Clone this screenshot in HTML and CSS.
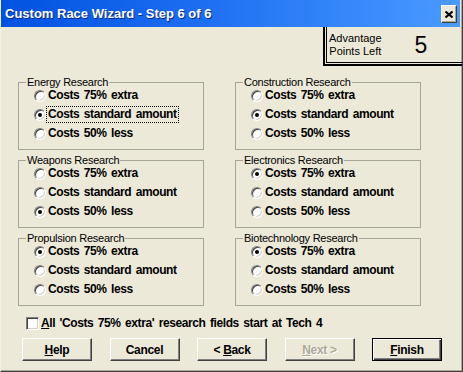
FILE: index.html
```html
<!DOCTYPE html>
<html lang="en">

<head>
    <meta charset="UTF-8">
    <title>Custom Race Wizard - Step 6 of 6</title>
    <link rel="stylesheet" href="styles.css">
</head>

<body>
    <div class="window">
        <div class="titlebar">
            <span class="title">Custom Race Wizard - Step 6 of 6</span>
            <span class="close">
                <svg width="8" height="7" viewBox="0 0 8 7">
                    <path d="M0.5 0.5 L7.5 6.5 M7.5 0.5 L0.5 6.5" stroke="#000" stroke-width="2" fill="none"/>
                </svg>
            </span>
        </div>

        <div class="points-row">
            <div class="points">
                <div class="points-inner">
                    <div class="points-label">Advantage<br>Points Left</div>
                    <div class="points-value">5</div>
                </div>
            </div>
        </div>

        <div class="groups">
            <div class="group">
                <div class="legend">Energy Research</div>
                <div class="opt"><span class="radio"></span><span class="txt">Costs 75% extra</span></div>
                <div class="opt"><span class="radio on"></span><span class="txt focus">Costs standard amount</span></div>
                <div class="opt"><span class="radio"></span><span class="txt">Costs 50% less</span></div>
            </div>
            <div class="group">
                <div class="legend">Construction Research</div>
                <div class="opt"><span class="radio"></span><span class="txt">Costs 75% extra</span></div>
                <div class="opt"><span class="radio on"></span><span class="txt">Costs standard amount</span></div>
                <div class="opt"><span class="radio"></span><span class="txt">Costs 50% less</span></div>
            </div>
            <div class="group">
                <div class="legend">Weapons Research</div>
                <div class="opt"><span class="radio"></span><span class="txt">Costs 75% extra</span></div>
                <div class="opt"><span class="radio"></span><span class="txt">Costs standard amount</span></div>
                <div class="opt"><span class="radio on"></span><span class="txt">Costs 50% less</span></div>
            </div>
            <div class="group">
                <div class="legend">Electronics Research</div>
                <div class="opt"><span class="radio on"></span><span class="txt">Costs 75% extra</span></div>
                <div class="opt"><span class="radio"></span><span class="txt">Costs standard amount</span></div>
                <div class="opt"><span class="radio"></span><span class="txt">Costs 50% less</span></div>
            </div>
            <div class="group">
                <div class="legend">Propulsion Research</div>
                <div class="opt"><span class="radio on"></span><span class="txt">Costs 75% extra</span></div>
                <div class="opt"><span class="radio"></span><span class="txt">Costs standard amount</span></div>
                <div class="opt"><span class="radio"></span><span class="txt">Costs 50% less</span></div>
            </div>
            <div class="group">
                <div class="legend">Biotechnology Research</div>
                <div class="opt"><span class="radio on"></span><span class="txt">Costs 75% extra</span></div>
                <div class="opt"><span class="radio"></span><span class="txt">Costs standard amount</span></div>
                <div class="opt"><span class="radio"></span><span class="txt">Costs 50% less</span></div>
            </div>
        </div>

        <div class="tech4">
            <span class="check"></span>
            <span class="txt"><u>A</u>ll 'Costs 75% extra' research fields start at Tech 4</span>
        </div>

        <div class="buttons">
            <div class="btn"><span><u>H</u>elp</span></div>
            <div class="btn"><span>Cancel</span></div>
            <div class="btn"><span>&lt; <u>B</u>ack</span></div>
            <div class="btn disabled"><span><u>N</u>ext &gt;</span></div>
            <div class="btn default"><span><u>F</u>inish</span></div>
        </div>
    </div>
</body>

</html>
```

FILE: styles.css
```css
html, body {
    margin: 0;
    padding: 0;
}

body {
    font-family: "Liberation Sans", Arial, sans-serif;
    background: #ece9d8;
}

.window {
    box-sizing: border-box;
    width: 463px;
    height: 372px;
    background: #ece9d8;
    border-left: 1px solid #f4f2ea;
    border-right: 1px solid #404040;
    border-bottom: 1px solid #404040;
    box-shadow: inset -1px -1px 0 #aca899;
    overflow: hidden;
}

.titlebar {
    height: 27px;
    margin-right: 2px;
    display: flex;
    align-items: center;
    justify-content: space-between;
    background: linear-gradient(to right, #0052e0, #1f6ff2 45%, #3d8ffd 85%, #4a9bff);
}

.title {
    padding-left: 4px;
    color: #fff;
    font-weight: bold;
    font-size: 13px;
    text-shadow: 1px 1px 0 #0a2a8a;
}

.close {
    box-sizing: border-box;
    width: 16px;
    height: 18px;
    margin-right: 3px;
    margin-top: 1px;
    display: flex;
    align-items: center;
    justify-content: center;
    background: #ece9d8;
    border: 1px solid;
    border-color: #fff #404040 #404040 #fff;
    box-shadow: inset -1px -1px 0 #aca899;
}

/* advantage points box */
.points-row {
    display: flex;
    justify-content: flex-end;
}

.points {
    width: 139px;
    height: 39px;
    box-sizing: border-box;
    border-left: 2px solid #000;
    border-bottom: 2px solid #000;
    padding: 0 0 1px 1px;
}

.points-inner {
    box-sizing: border-box;
    height: 100%;
    border-left: 1px solid #000;
    border-bottom: 1px solid #000;
    display: flex;
    align-items: flex-start;
    padding: 5px 0 0 2px;
}

.points-label {
    font-size: 11px;
    line-height: 13px;
    text-align: center;
    color: #000;
}

.points-value {
    margin-left: 33px;
    margin-top: 1px;
    font-size: 23px;
    line-height: 24px;
}

/* research groups */
.groups {
    display: grid;
    grid-template-columns: 186px 186px;
    column-gap: 31px;
    row-gap: 10px;
    padding-left: 17px;
    margin-top: 16px;
}

.group {
    box-sizing: border-box;
    height: 68px;
    border: 1px solid #a5a59a;
}

.legend {
    display: block;
    width: max-content;
    height: 13px;
    margin: -7px 0 0 7px;
    padding: 0 1px;
    background: #ece9d8;
    font-size: 11px;
    line-height: 13px;
    letter-spacing: -0.25px;
}

.legend + .opt {
    margin-top: -3px;
}

.opt {
    height: 19px;
    display: flex;
    align-items: center;
    padding-left: 15px;
}

.txt {
    font-weight: bold;
    font-size: 12px;
    line-height: 15px;
    letter-spacing: -0.4px;
    word-spacing: 1.5px;
    border: 1px dotted transparent;
    padding: 0 1px 0 1px;
}

.txt.focus {
    border-color: #000;
}

.radio {
    position: relative;
    box-sizing: border-box;
    width: 12px;
    height: 12px;
    border-radius: 50%;
    background: #fff;
    border: 1px solid;
    border-color: #808080 #fff #fff #808080;
    box-shadow: inset 1px 1px 0 #404040, inset -1px -1px 0 #d4d0c8;
}

.radio.on::after {
    content: "";
    position: absolute;
    left: 3px;
    top: 3px;
    width: 4px;
    height: 4px;
    border-radius: 50%;
    background: #000;
}

/* checkbox row */
.tech4 {
    display: flex;
    align-items: center;
    margin: 11px 0 0 25px;
    height: 13px;
}

.check {
    box-sizing: border-box;
    width: 13px;
    height: 13px;
    background: #fff;
    border: 1px solid;
    border-color: #808080 #fff #fff #808080;
    box-shadow: inset 1px 1px 0 #404040, inset -1px -1px 0 #d4d0c8;
}

/* buttons */
.buttons {
    display: flex;
    gap: 17.5px;
    margin: 8px 0 0 21px;
}

.btn {
    box-sizing: border-box;
    width: 70px;
    height: 23px;
    display: flex;
    align-items: center;
    justify-content: center;
    font-weight: bold;
    font-size: 12px;
    letter-spacing: -0.3px;
    background: #ece9d8;
    border: 1px solid;
    border-color: #fff #404040 #404040 #fff;
    box-shadow: inset -1px -1px 0 #808080;
}

.btn.disabled {
    color: #aca899;
    text-shadow: 1px 1px 0 #fff;
}

.btn.default {
    border: 1px solid #000;
    box-shadow: inset 1px 1px 0 #fff, inset -1px -1px 0 #404040, inset -2px -2px 0 #808080;
}
```
